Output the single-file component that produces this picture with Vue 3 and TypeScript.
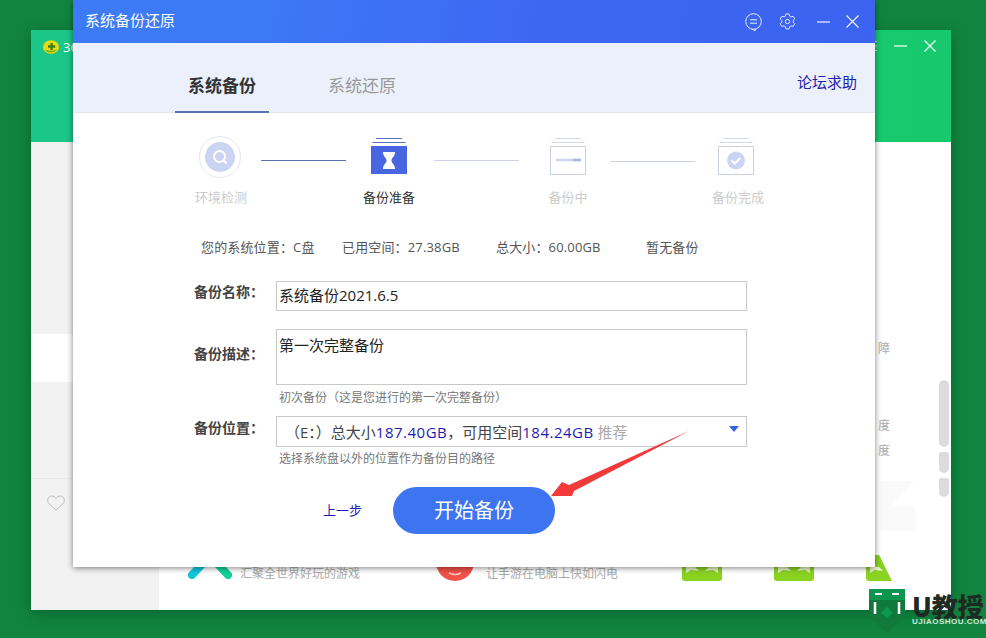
<script setup lang="ts">
const tiles: string[] = ['t1', 't2', 't3']
</script>

<template>
  <div class="desktop">
    <div class="app">
      <header class="app-head">
        <div class="app-brand">
          <svg width="16" height="14" viewBox="0 0 16 14"><ellipse cx="8" cy="7" rx="8" ry="6.800" fill="#e9dc10"/><path d="M2 9.500c1.500 4 10.500 4 12 0-3 1.500-9 1.500-12 0z" fill="#7fae16"/><path d="M8.600 3v7M5 6.500h7.200" stroke="#3f7d12" stroke-width="2.400"/></svg>
          <span>360</span>
        </div>
        <div class="app-ctrl">
          <svg width="4" height="12" viewBox="0 0 4 12"><path d="M0 1.500h4M0 6h4M0 10.500h4" stroke="#bfeed5"/></svg>
          <svg width="13" height="2" viewBox="0 0 13 2"><path d="M0 1h13" stroke="#e8fff2" stroke-width="1.300"/></svg>
          <svg width="12" height="12" viewBox="0 0 12 12"><path d="M.5.500l11 11M11.500.500l-11 11" stroke="#e8fff2" stroke-width="1.300"/></svg>
        </div>
      </header>
      <div class="app-body">
        <aside class="side">
          <div class="side-band"></div>
          <div class="side-like">
            <svg width="18" height="16" viewBox="0 0 18 16"><path d="M9 15L2 8.500C-.5 6 .8 1 4.600 1 6.600 1 8 2 9 3.500 10 2 11.400 1 13.400 1c3.800 0 5.100 5 2.600 7.500z" fill="none" stroke="#bdbdbd"/></svg>
          </div>
        </aside>
        <main class="main">
          <div class="peek p1">障</div>
          <div class="peek p2">度</div>
          <div class="peek p3">度</div>
          <div class="ghost"></div>
          <div class="promo">
            <div class="promo-item i1">
              <svg width="44" height="24" viewBox="0 0 44 24"><path d="M4 20L19 4" stroke="#12c8dc" stroke-width="8" stroke-linecap="round"/><path d="M25 4L40 20" stroke="#0fd39a" stroke-width="8" stroke-linecap="round"/></svg>
              <span>汇聚全世界好玩的游戏</span>
            </div>
            <div class="promo-item i2">
              <svg width="38" height="26" viewBox="0 0 38 26"><path d="M0 7h38a19 19 0 0 1-38 0z" fill="#f1524a"/><path d="M13 18q6 3 12 0" stroke="#ffc3bd" stroke-width="1.500" fill="none"/></svg>
              <span>让手游在电脑上快如闪电</span>
            </div>
            <svg v-for="t in tiles" :key="t" :class="['tile', t]" width="40" height="26" viewBox="0 0 40 26"><path d="M0 0h40v23a3 3 0 0 1-3 3H3a3 3 0 0 1-3-3z" fill="#8bd321"/><path d="M4 12h9l4 4-8-1-5 3zM36 12h-9l-4 4 8-1 5 3z" fill="#e4f5cb"/></svg>
          </div>
          <div class="scroll">
            <i class="s1"></i><i class="s2"></i><i class="s3"></i>
          </div>
        </main>
      </div>
    </div>

    <section class="dialog">
      <div class="titlebar">
        <span class="title">系统备份还原</span>
        <div class="tools">
          <svg width="17" height="18" viewBox="0 0 17 18" fill="none" stroke="#e6edff"><circle cx="8.500" cy="8.500" r="7.800"/><path d="M7 16.200l3 1.600.4-1.900" /><path d="M5 6.800h7M5 10.200h7"/></svg>
          <svg class="t-gear" width="17" height="17" viewBox="0 0 18 18" fill="none" stroke="#e6edff"><path d="M7.300 1h3.400l.5 2.300 1.500.9 2.300-.7 1.700 2.900-1.700 1.600v1.800l1.700 1.600-1.700 2.900-2.300-.7-1.500.9-.5 2.300H7.300l-.5-2.300-1.500-.9-2.300.7-1.700-2.900L3 9.800V8L1.300 6.400 3 3.500l2.300.7 1.500-.9z"/><circle cx="9" cy="9" r="2.300"/></svg>
          <svg class="t-min" width="13" height="2" viewBox="0 0 13 2"><path d="M0 1h13" stroke="#eef3ff" stroke-width="1.200"/></svg>
          <svg class="t-close" width="13" height="13" viewBox="0 0 13 13"><path d="M.5.500l12 12M12.500.500l-12 12" stroke="#eef3ff" stroke-width="1.200"/></svg>
        </div>
      </div>

      <nav class="tabs">
        <span class="tab on">系统备份</span>
        <span class="tab">系统还原</span>
        <span class="help">论坛求助</span>
      </nav>

      <div class="steps">
        <div class="step off">
          <svg class="big" width="44" height="44" viewBox="0 0 44 44"><circle cx="22" cy="22" r="20.500" fill="#fff" stroke="#e3e6f3"/><circle cx="22" cy="22" r="15" fill="#ccd4f4"/><circle cx="21.500" cy="21.500" r="5.500" fill="none" stroke="#fff" stroke-width="2"/><path d="M25.500 25.500l3 3" stroke="#fff" stroke-width="2"/></svg>
          <span>环境检测</span>
        </div>
        <div class="line dark"></div>
        <div class="step cur">
          <svg width="38" height="38" viewBox="0 0 38 38"><path d="M6 .500h26M2.500 4.500h33" stroke="#5d6fb5"/><rect x="1" y="8" width="36" height="28" fill="#4a65e0"/><path d="M13 14h12c0 5-3.500 5.500-3.500 8.500S25 26 25 31H13c0-5 3.500-5.500 3.500-8.500S13 19 13 14z" fill="#fff"/></svg>
          <span>备份准备</span>
        </div>
        <div class="line l2"></div>
        <div class="step off">
          <svg width="38" height="38" viewBox="0 0 38 38"><path d="M6 .500h26M2.500 4.500h33" stroke="#d5d9e6"/><rect x="1.500" y="8.500" width="35" height="28" fill="#fff" stroke="#ccd2e6"/><path d="M7 22h17" stroke="#cfd6f4" stroke-width="2.500"/><path d="M24 22h8" stroke="#a6b2e0" stroke-width="2.500"/></svg>
          <span>备份中</span>
        </div>
        <div class="line l3"></div>
        <div class="step off last">
          <svg width="38" height="38" viewBox="0 0 38 38"><path d="M6 .500h26M2.500 4.500h33" stroke="#d5d9e6"/><rect x="1.500" y="8.500" width="35" height="28" fill="#fff" stroke="#ccd2e6"/><circle cx="19" cy="22.500" r="9" fill="#ccd4f4"/><path d="M14.500 22.500l3.200 3 5.500-5.500" stroke="#fff" stroke-width="2" fill="none"/></svg>
          <span>备份完成</span>
        </div>
      </div>

      <div class="info">
        <span>您的系统位置：C盘</span>
        <span>已用空间：27.38GB</span>
        <span>总大小：60.00GB</span>
        <span>暂无备份</span>
      </div>

      <div class="form">
        <div class="row r-name">
          <label>备份名称：</label>
          <div class="box one">系统备份2021.6.5</div>
        </div>
        <div class="row r-desc">
          <label>备份描述：</label>
          <div class="box two">第一次完整备份</div>
        </div>
        <p class="hint h1">初次备份（这是您进行的第一次完整备份）</p>
        <div class="row r-loc">
          <label>备份位置：</label>
          <div class="box sel">
            <span class="drive">（E：）总大小<b>187.40GB</b>，可用空间<b>184.24GB</b> <em>推荐</em></span>
            <i class="caret"></i>
          </div>
        </div>
        <p class="hint h2">选择系统盘以外的位置作为备份目的路径</p>
      </div>

      <div class="actions">
        <span class="prev">上一步</span>
        <span class="start">开始备份</span>
      </div>
    </section>

    <svg class="arrow" width="150" height="75" viewBox="0 0 150 75"><path d="M1 65L12 51l7 3L139 0 24 60l-2 5z" fill="#f23a3a"/></svg>

    <div class="mark">
      <svg width="37" height="44" viewBox="0 0 37 44"><path d="M0 0h36v27L18 44 0 27z" fill="#0f7a3c"/><path d="M0 0h36v11H0z" fill="#0c9650"/><path d="M6 5h7M23 5h7" stroke="#fff" stroke-width="2"/><path d="M6 13v12M30 13v12" stroke="#fff" stroke-width="2.500"/><path d="M12 24l6-6 6 6-6 5z" fill="#0c9a50"/></svg>
      <div class="mark-text">
        <strong>U教授</strong>
        <small>UJIAOSHOU.COM</small>
      </div>
    </div>
  </div>
</template>

<style scoped>
.desktop {
  position: relative;
  width: 986px;
  height: 638px;
  overflow: hidden;
  background: #118540;
  font-family: "Open Sans", "Noto Sans CJK SC", sans-serif;
}
.app {
  position: absolute;
  left: 31px;
  top: 30px;
  width: 920px;
  height: 580px;
  display: flex;
  flex-direction: column;
  box-shadow: 0 3px 14px rgba(0, 50, 20, 0.4);
}
.app-head {
  height: 112px;
  flex: none;
  background: linear-gradient(90deg, #1bc689, #17c96c);
  display: flex;
  justify-content: space-between;
  padding: 10px 15px 0 12px;
  box-sizing: border-box;
  color: #fff;
  font-size: 13px;
}
.app-brand { display: flex; gap: 4px; align-items: flex-start; line-height: 14px; }
.app-ctrl { display: flex; gap: 17px; align-items: flex-start; }
.app-ctrl svg:nth-child(2) { margin-top: 5px; }
.app-body { flex: 1; display: flex; min-height: 0; }
.side { width: 128px; background: #f2f2f2; display: flex; flex-direction: column; }
.side-band { margin-top: 192px; height: 48px; background: #fff; }
.side-like { margin-top: 96px; padding: 15px 0 0 16px; border-top: 1px solid #e9e9e9; }
.main { flex: 1; background: #fff; position: relative; display: flex; flex-direction: column; color: #aaa; font-size: 12px; }
.peek { padding-left: 719px; line-height: 14px; }
.p1 { margin-top: 200px; }
.p2 { margin-top: 63px; }
.p3 { margin-top: 11px; }
.ghost {
  margin: 23px 0 0 721px;
  width: 35px;
  height: 50px;
  background: #fafafa;
  clip-path: polygon(0 0, 100% 0, 30% 50%, 100% 50%, 100% 100%, 0 100%);
  flex: none;
}
.promo { margin-top: auto; margin-bottom: 5px; height: 50px; padding-left: 29px; box-sizing: border-box; display: flex; align-items: flex-start; }
.promo-item { display: flex; gap: 8px; align-items: flex-start; line-height: 22px; }
.promo-item span { margin-top: 8px; }
.i1 { width: 248px; }
.i2 { width: 246px; gap: 12px; }
.tile { margin-right: 52px; flex: none; }
.t3 { margin: 0; clip-path: polygon(0 0, 33% 0, 65% 100%, 0 100%); }
.scroll { position: absolute; right: 2px; top: 238px; width: 10px; display: flex; flex-direction: column; gap: 5px; }
.scroll i { display: block; background: #dcdcdc; border-radius: 5px; }
.s1 { height: 67px; }
.scroll .s2 { height: 21px; border-radius: 2px 2px 5px 5px; }
.scroll .s3 { height: 19px; border-radius: 2px 2px 5px 5px; }

.dialog {
  position: absolute;
  left: 73px;
  top: 0;
  width: 802px;
  height: 567px;
  background: #fff;
  box-shadow: 0 1px 6px rgba(0, 0, 0, 0.5);
  color: #333;
}
.titlebar {
  height: 43px;
  box-sizing: border-box;
  padding: 0 16px 3px 12px;
  display: flex;
  align-items: center;
  justify-content: space-between;
  background: linear-gradient(105deg, #3d7bf6 0%, #3d78f5 24%, #3d66f2 60%, #3b63f0 100%);
  color: #fff;
}
.title { font-size: 15px; line-height: 20px; }
.tools { display: flex; align-items: center; padding-top: 3px; }
.tools svg { display: block; }
.t-gear { margin-left: 17px; }
.t-min { margin-left: 21px; }
.t-close { margin-left: 16px; }
.tabs {
  height: 70px;
  box-sizing: border-box;
  background: #ecf0fb;
  border-bottom: 1px solid #e4e6ee;
  padding-left: 102px;
  padding-right: 18px;
  display: flex;
  align-items: flex-start;
}
.tab {
  width: 94px;
  height: 70px;
  box-sizing: border-box;
  padding-top: 29px;
  text-align: center;
  font-size: 17px;
  line-height: 27px;
  color: #999;
}
.tab + .tab { margin-left: 46px; }
.tab.on { color: #333; font-weight: 700; border-bottom: 2px solid #5a72b0; }
.help { margin-left: auto; margin-top: 27px; font-size: 15px; line-height: 24px; color: #1d1db0; }
.steps {
  padding: 25px 0 0 108px;
  display: grid;
  grid-template-columns: 80px 88px 80px 99px 80px 88px 80px;
  grid-auto-rows: 70px;
}
.step { display: flex; flex-direction: column; align-items: center; height: 70px; }
.step svg { display: block; }
.step svg.big { margin: -3px 2px -3px 0; }
.step span { margin-top: 11px; font-size: 13px; line-height: 20px; color: #333; white-space: nowrap; }
.step.off span { color: #ccc; }
.step.last span { margin-left: 4px; }
.line { height: 1px; width: 85px; background: #cdd2e8; margin-top: 22px; }
.line.dark { background: #5a72b0; }
.l2 { margin-left: 5px; }
.l3 { margin-left: 2px; margin-top: 23px; }
.info {
  margin-top: 29px;
  padding-left: 128px;
  display: grid;
  grid-template-columns: 141px 154px 150px auto;
  font-size: 13px;
  line-height: 20px;
  letter-spacing: 0.15px;
  color: #555;
  white-space: nowrap;
}
.form { margin-top: 24px; padding-left: 121px; }
.row { display: flex; align-items: center; }
.row label { width: 82px; flex: none; font-size: 14px; font-weight: 700; color: #444; line-height: 22px; }
.box { width: 471px; box-sizing: border-box; border: 1px solid #c9c9c9; color: #222; font-size: 15px; padding: 0 2px; }
.one { height: 30px; line-height: 26px; }
.r-name label { margin-top: -8px; }
.r-desc { margin-top: 18px; }
.r-desc label { margin-top: -6px; }
.two { height: 56px; line-height: 30px; }
.hint { margin: 0; padding-left: 85px; font-size: 12px; line-height: 18px; color: #777; }
.h1 { margin-top: 4px; }
.r-loc { margin-top: 9px; }
.r-loc label { margin-top: -8px; }
.sel { height: 31px; display: flex; align-items: center; justify-content: space-between; padding: 0 7px 0 8px; color: #444; }
.drive { white-space: nowrap; line-height: 30px; }
.drive b { font-weight: 400; color: #1d1db0; letter-spacing: 0.5px; }
.drive em { font-style: normal; color: #aaa; }
.caret { width: 0; height: 0; border-left: 5.5px solid transparent; border-right: 5.5px solid transparent; border-top: 6px solid #3a62dc; margin-top: -5px; }
.h2 { margin-top: 3px; }
.actions { margin-top: 19px; padding-left: 250px; display: flex; align-items: center; }
.prev { font-size: 13px; color: #1d1db0; width: 70px; line-height: 20px; margin-top: -2px; }
.start {
  width: 162px;
  height: 47px;
  border-radius: 24px;
  background: #3d74f0;
  color: #fff;
  font-size: 20px;
  line-height: 47px;
  text-align: center;
}
.arrow { position: absolute; left: 550px; top: 431px; }
.mark { position: absolute; left: 869px; top: 589px; display: flex; gap: 6px; }
.mark-text { display: flex; flex-direction: column; color: #1d2b22; margin-top: 5px; }
.mark-text strong { font-size: 26px; line-height: 24px; font-weight: 900; font-family: "Noto Sans CJK SC", sans-serif; }
.mark-text small { font-size: 8px; line-height: 8px; font-weight: 700; color: #cfe8d8; letter-spacing: 0.5px; font-family: "Liberation Sans", sans-serif; white-space: nowrap; }
</style>
